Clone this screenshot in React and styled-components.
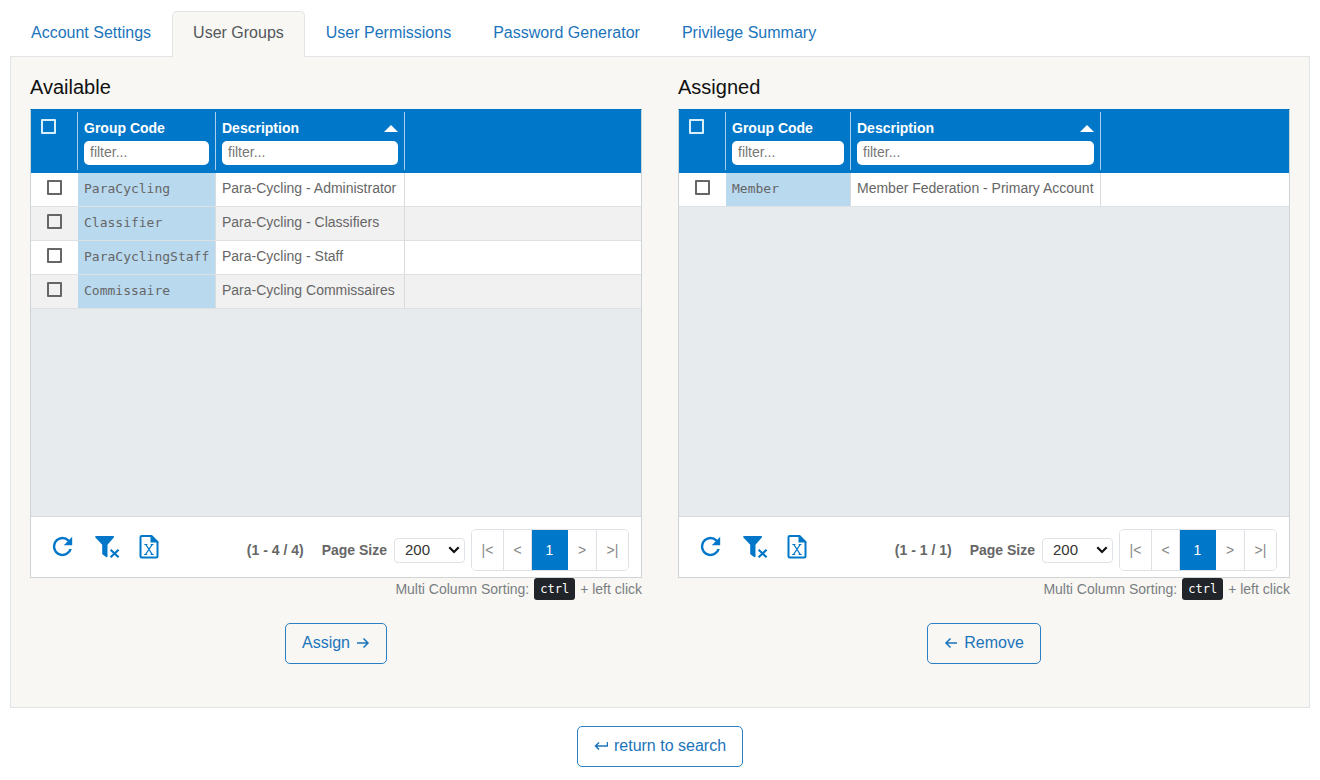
import React, { useId } from "react";
import styled, { createGlobalStyle } from "styled-components";

const BLUE = "#0077c8";
const LINK = "#1b74bb";
const SANS = '"Liberation Sans", Arial, sans-serif';
const MONO = '"DejaVu Sans Mono", monospace';

const GlobalStyle = createGlobalStyle`
  *, *::before, *::after { box-sizing: border-box; }
  body { margin: 0; background: #fff; color: #666; font: 14px/20px ${SANS}; }
  button, input, select { font-family: inherit; margin: 0; }
`;

const Page = styled.div`
  padding: 11px 10px 13px;
`;

const Tabs = styled.nav`
  display: flex;
`;

const Tab = styled.a`
  padding: 9px 20px 12px;
  margin-bottom: -1px;
  border: 1px solid ${(p) => (p.$active ? "#e2e5e8" : "transparent")};
  border-bottom: 0;
  border-radius: 5px 5px 0 0;
  background: ${(p) => (p.$active ? "#f8f7f3" : "transparent")};
  color: ${(p) => (p.$active ? "#54585c" : LINK)};
  font-size: 16px;
  line-height: 24px;
  text-decoration: none;
  position: relative;
`;

const Panel = styled.main`
  display: grid;
  grid-template-columns: minmax(0, 1fr) minmax(0, 1fr);
  gap: 36px;
  padding: 18px 19px 43px;
  border: 1px solid #e2e5e8;
  background: #f8f7f3;
`;

const Section = styled.section`
  display: flex;
  flex-direction: column;
`;

const Heading = styled.h2`
  margin: 0 0 10px;
  color: #111;
  font-size: 20px;
  font-weight: 400;
  line-height: 24px;
`;

const Grid = styled.div`
  border: 1px solid #cfd3d6;
  border-top-color: ${BLUE};
  background: #fff;
`;

const GridBody = styled.div`
  min-height: 407px;
  border-bottom: 1px solid #d5d9dc;
  background: #e8ebee;
`;

const Table = styled.table`
  width: 100%;
  table-layout: fixed;
  border-collapse: separate;
  border-spacing: 0;
`;

const Col = styled.col`
  width: ${(p) => (p.$width ? p.$width + "px" : "auto")};
`;

const HeadCell = styled.th`
  padding: 2px 0 3px;
  background: ${BLUE};
  color: #fff;
  font-weight: 700;
  text-align: left;
  vertical-align: top;
`;

const HeadInner = styled.div`
  height: 58px;
  padding: 6px 6px 0;
  border-right: 1px solid #a9cfec;
`;

const SelectAll = styled(HeadInner)`
  padding: 7px 0 0 10px;
`;

const HeadLabel = styled.div`
  display: flex;
  align-items: center;
  justify-content: space-between;
  height: 20px;
  margin-bottom: 3px;
`;

const SortMark = styled.span`
  border: 7px solid transparent;
  border-top: 0;
  border-bottom: 7px solid #fff;
`;

const Filter = styled.input`
  display: block;
  width: 100%;
  height: 24px;
  padding: 0 6px 2px;
  border: 0;
  border-radius: 5px;
  background: #fff;
  color: #555;
  font-size: 14px;

  &::placeholder { color: #777; opacity: 1; }
`;

const Check = styled.input`
  appearance: none;
  display: block;
  width: 15px;
  height: 15px;
  border: 2px solid ${(p) => (p.$light ? "#d9effc" : "#666")};
  border-radius: 1px;

  &:checked { background: currentColor; }
`;

const Row = styled.tr`
  background: #fff;
  &:nth-child(even) { background: #f1f1f1; }
`;

const Cell = styled.td`
  height: 34px;
  padding: 0 6px 3px;
  border-bottom: 1px solid #dde1e4;
  border-right: 1px solid #d8dcdf;
  white-space: nowrap;

  &:last-child { border-right: 0; }
`;

const CheckCell = styled(Cell)`
  padding: 0 0 4px 16px;
  border-right: 0;
`;

const CodeCell = styled(Cell)`
  padding-bottom: 2px;
  background: #b9d9ef;
  font-family: ${MONO};
  font-size: 13px;
`;

const Footer = styled.div`
  display: flex;
  align-items: center;
  height: 60px;
  padding: 6px 12px 0 17px;
`;

const Tools = styled.div`
  display: flex;
  gap: 17px;
  margin: 0 auto 8px 0;
`;

const Tool = styled.button`
  display: flex;
  padding: 0;
  border: 0;
  background: none;
  color: ${BLUE};
  cursor: pointer;
`;

const Strong = styled.span`
  margin-right: ${(p) => p.$gap}px;
  font-weight: 700;
  white-space: nowrap;
`;

const SizeBox = styled.div`
  display: grid;
  align-items: center;
  margin-right: 6px;

  > * { grid-area: 1 / 1; }
  svg { justify-self: end; margin-right: 5px; pointer-events: none; }
`;

const SizeSelect = styled.select`
  appearance: none;
  width: 71px;
  height: 25px;
  padding: 0 10px 1px;
  border: 1px solid #dfe3e7;
  border-radius: 4px;
  background: #fff;
  color: #333;
  font-size: 15px;
`;

const Pager = styled.div`
  display: flex;
  overflow: hidden;
  height: 42px;
  border: 1px solid #dee2e6;
  border-radius: 5px;
`;

const PageButton = styled.button`
  width: ${(p) => p.$width}px;
  padding: 0;
  border: 0;
  border-right: 1px solid ${(p) => (p.$current ? BLUE : "#dee2e6")};
  background: ${(p) => (p.$current ? BLUE : "#fff")};
  color: ${(p) => (p.$current ? "#fff" : "#868686")};
  font-size: 14px;

  &:last-child { border-right: 0; }
`;

const Hint = styled.p`
  display: flex;
  align-items: center;
  justify-content: flex-end;
  gap: 5px;
  height: 22px;
  margin: 0;
  color: #7a7e82;
`;

const Key = styled.kbd`
  padding: 1px 6px;
  border-radius: 3px;
  background: #212529;
  color: #fff;
  font: 12px/20px ${MONO};
`;

const Actions = styled.div`
  display: flex;
  justify-content: center;
  margin-top: ${(p) => p.$top}px;
`;

const OutlineButton = styled.button`
  display: flex;
  align-items: center;
  gap: 6px;
  height: 41px;
  padding: 0 16px 1px;
  border: 1px solid #2a80c4;
  border-radius: 5px;
  background: transparent;
  color: ${LINK};
  font-size: 16px;
  cursor: pointer;
`;

function Refresh() {
  return (
    <svg width="29" height="29" viewBox="0 0 24 24" fill="currentColor" aria-hidden="true">
      <path d="M17.65 6.35A7.96 7.96 0 0 0 12 4a8 8 0 1 0 7.73 10h-2.08A6 6 0 1 1 12 6c1.66 0 3.14.69 4.22 1.78L13 11h7V4z" />
    </svg>
  );
}

function ClearFilter() {
  return (
    <svg width="28" height="29" viewBox="0 0 28 29" fill="currentColor" aria-hidden="true">
      <path d="M2 4h17.200c.8 0 1.100.9.6 1.500l-6.300 7.200V24.300c0 .8-.8 1.100-1.400.7l-3.500-2.600c-.3-.2-.4-.4-.4-.8v-8.900L1.400 5.500C.9 4.900 1.200 4 2 4z" />
      <path d="M16.600 17.800l8 7.400m0-7.400l-8 7.400" fill="none" stroke="currentColor" strokeWidth="2.200" />
    </svg>
  );
}

function ExcelFile() {
  return (
    <svg width="20" height="29" viewBox="0 0 20 29" fill="none" stroke="currentColor" aria-hidden="true">
      <path d="M12.500 4H2.800C2 4 1.500 4.500 1.500 5.300v18.900c0 .8.5 1.300 1.300 1.300h14.400c.8 0 1.300-.5 1.300-1.300V10z" strokeWidth="2" />
      <path d="M11.500 3.500V10.500h7.500z" fill="currentColor" stroke="none" />
      <path d="M6.800 12.500l6.500 10M13.200 12.500L6.500 22.500" strokeWidth="1.300" />
      <path d="M5.400 12.500h3M11.700 12.500h2.800M5.200 22.500h3M11.700 22.500h3" strokeWidth="1" />
    </svg>
  );
}

function Chevron() {
  return (
    <svg width="12" height="8" viewBox="0 0 12 8" fill="none" stroke="#111" strokeWidth="2.200" aria-hidden="true">
      <path d="M1.300 1.300L6 6l4.700-4.700" />
    </svg>
  );
}

const ARROWS = {
  right: "M1 7h11M7.500 2.500L12 7l-4.500 4.500",
  left: "M13 7H2M6.500 2.500L2 7l4.500 4.500",
  back: "M13.500 3V7H1.500M5 3.500L1.500 7L5 10.500",
};

function Arrow({ kind }) {
  return (
    <svg width="14" height="14" viewBox="0 0 14 14" fill="none" stroke="currentColor" strokeWidth="1.500" aria-hidden="true">
      <path d={ARROWS[kind]} />
    </svg>
  );
}

const PAGES = [
  { label: "|<", name: "First page", width: 32 },
  { label: "<", name: "Previous page", width: 28 },
  { label: "1", name: "Page 1", width: 36, current: true },
  { label: ">", name: "Next page", width: 29 },
  { label: ">|", name: "Last page", width: 31 },
];

function GroupList({ title, codeWidth, descWidth, rows, count, action }) {
  const sizeId = useId();
  return (
    <Section>
      <Heading>{title}</Heading>
      <Grid>
        <GridBody>
          <Table>
            <colgroup>
              <Col $width={47} />
              <Col $width={codeWidth} />
              <Col $width={descWidth} />
              <Col />
            </colgroup>
            <thead>
              <tr>
                <HeadCell>
                  <SelectAll>
                    <Check type="checkbox" $light aria-label={`Select all ${title}`} />
                  </SelectAll>
                </HeadCell>
                <HeadCell>
                  <HeadInner>
                    <HeadLabel>Group Code</HeadLabel>
                    <Filter placeholder="filter..." aria-label="Filter group code" />
                  </HeadInner>
                </HeadCell>
                <HeadCell aria-sort="ascending">
                  <HeadInner>
                    <HeadLabel>
                      Description
                      <SortMark />
                    </HeadLabel>
                    <Filter placeholder="filter..." aria-label="Filter description" />
                  </HeadInner>
                </HeadCell>
                <HeadCell as="td" />
              </tr>
            </thead>
            <tbody>
              {rows.map(([code, description]) => (
                <Row key={code}>
                  <CheckCell>
                    <Check type="checkbox" aria-label={code} />
                  </CheckCell>
                  <CodeCell>{code}</CodeCell>
                  <Cell>{description}</Cell>
                  <Cell />
                </Row>
              ))}
            </tbody>
          </Table>
        </GridBody>
        <Footer>
          <Tools>
            <Tool type="button" aria-label="Refresh"><Refresh /></Tool>
            <Tool type="button" aria-label="Clear filters"><ClearFilter /></Tool>
            <Tool type="button" aria-label="Export to Excel"><ExcelFile /></Tool>
          </Tools>
          <Strong $gap={18}>{count}</Strong>
          <Strong as="label" htmlFor={sizeId} $gap={7}>Page Size</Strong>
          <SizeBox>
            <SizeSelect id={sizeId} defaultValue="200">
              <option>200</option>
            </SizeSelect>
            <Chevron />
          </SizeBox>
          <Pager>
            {PAGES.map((p) => (
              <PageButton key={p.name} type="button" aria-label={p.name} $width={p.width} $current={p.current}>
                {p.label}
              </PageButton>
            ))}
          </Pager>
        </Footer>
      </Grid>
      <Hint>
        Multi Column Sorting: <Key>ctrl</Key> + left click
      </Hint>
      <Actions $top={23}>{action}</Actions>
    </Section>
  );
}

const TABS = ["Account Settings", "User Groups", "User Permissions", "Password Generator", "Privilege Summary"];

const AVAILABLE = [
  ["ParaCycling", "Para-Cycling - Administrator"],
  ["Classifier", "Para-Cycling - Classifiers"],
  ["ParaCyclingStaff", "Para-Cycling - Staff"],
  ["Commissaire", "Para-Cycling Commissaires"],
];

const ASSIGNED = [["Member", "Member Federation - Primary Account"]];

export default function App() {
  return (
    <>
      <GlobalStyle />
      <Page>
        <Tabs>
          {TABS.map((label) => (
            <Tab key={label} href="#" $active={label === "User Groups"}>{label}</Tab>
          ))}
        </Tabs>
        <Panel>
          <GroupList
            title="Available"
            codeWidth={138}
            descWidth={189}
            rows={AVAILABLE}
            count="(1 - 4 / 4)"
            action={<OutlineButton type="button">Assign <Arrow kind="right" /></OutlineButton>}
          />
          <GroupList
            title="Assigned"
            codeWidth={125}
            descWidth={250}
            rows={ASSIGNED}
            count="(1 - 1 / 1)"
            action={<OutlineButton type="button"><Arrow kind="left" /> Remove</OutlineButton>}
          />
        </Panel>
        <Actions $top={18}>
          <OutlineButton type="button"><Arrow kind="back" /> return to search</OutlineButton>
        </Actions>
      </Page>
    </>
  );
}
